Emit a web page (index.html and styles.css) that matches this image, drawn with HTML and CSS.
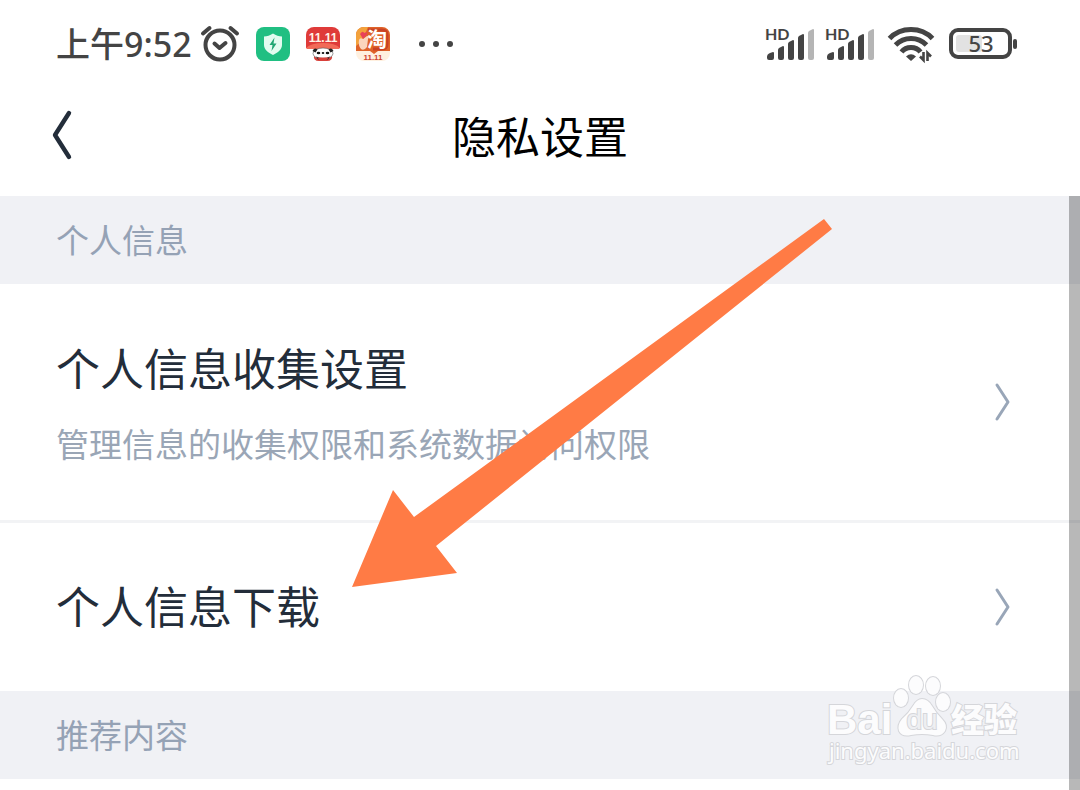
FILE: index.html
```html
<!DOCTYPE html>
<html lang="zh-CN">
<head>
<meta charset="utf-8">
<meta name="viewport" content="width=device-width, initial-scale=1">
<title>隐私设置</title>
<link rel="stylesheet" href="styles.css">
</head>
<body>
<div class="status">
  <div class="status-left">
    <span class="clock">上午9:52</span>
    <svg class="alarm" width="40" height="38" viewBox="0 0 40 38" fill="none" stroke="#444" stroke-width="4" stroke-linecap="round" stroke-linejoin="round">
      <circle cx="20" cy="20" r="14.500"/>
      <path d="M14.500 18.500L19.500 23l6-5"/>
      <path d="M3 8.500L9.500 3M37 8.500L30.500 3" stroke-width="4"/>
    </svg>
    <svg class="app" width="34" height="34" viewBox="0 0 34 34">
      <rect width="34" height="34" rx="8" fill="#20bf82"/>
      <path d="M17 6.500c3 2 6 2.800 9 3v8.500c0 4.500-4 7.500-9 10-5-2.500-9-5.500-9-10V9.500c3-.2 6-1 9-3z" fill="#e2fbf0"/>
      <path d="M18.500 10.500l-5 7.500h3l-1 6 5-7.500h-3z" fill="#20a673"/>
    </svg>
    <svg class="app" width="34" height="34" viewBox="0 0 34 34">
      <path d="M0 21V8a8 8 0 0 1 8-8h18a8 8 0 0 1 8 8v13z" fill="#df3b39"/>
      <path d="M0 21q5-5 17-5t17 5l-1 1H1z" fill="#f26a57"/>
      <text class="mini" x="17" y="15" font-size="12" fill="#fff3e6" text-anchor="middle">11.11</text>
      <path d="M8 28h18q1 6-5 6h-8q-6 0-5-6z" fill="#d8403a"/>
      <ellipse cx="17" cy="26.500" rx="10" ry="5.500" fill="#fff" stroke="#555" stroke-width=".6"/>
      <path d="M6.500 24q2-4 5-1.500l-2 3zM27.500 24q-2-4-5-1.500l2 3zM10 29.500q7 3 14 0l-2 3H12z" fill="#222"/>
      <ellipse cx="12.500" cy="26" rx="1.800" ry="1.300" fill="#111"/><ellipse cx="21.500" cy="26" rx="1.800" ry="1.300" fill="#111"/>
      <ellipse cx="17" cy="26" rx="1.300" ry="1" fill="#111"/>
      <path d="M11 30.500h12l-3 3h-6z" fill="#d8403a"/>
    </svg>
    <svg class="app" width="34" height="34" viewBox="0 0 34 34">
      <rect width="34" height="34" rx="8" fill="#fff0df"/>
      <path d="M0 24V8a8 8 0 0 1 8-8h18a8 8 0 0 1 8 8v16H22l-4 3-4-3z" fill="#df6329"/>
      <path d="M0 8a8 8 0 0 1 8-8h4L6 14l-6 5z" fill="#f3a23c"/>
      <path d="M12 3h14q5 0 5 5v9q0 5-5 5h-9" fill="none" stroke="#c94224" stroke-width="3"/>
      <text class="mini" x="21" y="20" font-size="20" fill="#fff" text-anchor="middle">淘</text>
      <path d="M3 13q1-3 4-1l4-3q3 0 1 3l-1 8q-3 4-6 2-3-3-2-9z" fill="#fbd5bd"/>
      <path d="M4 7q3-4 4-1 4-2 3 1l-4 5z" fill="#e9415a"/>
      <text class="mini" x="17" y="33" font-size="8" fill="#cf4530" text-anchor="middle">11.11</text>
    </svg>
    <svg class="more" width="36" height="8" viewBox="0 0 36 8" fill="#444"><circle cx="4" cy="4" r="3"/><circle cx="18" cy="4" r="3"/><circle cx="32" cy="4" r="3"/></svg>
  </div>
  <div class="status-right">
    <svg class="signal" width="50" height="34" viewBox="0 0 50 34" fill="#444">
      <text class="hd" x="0" y="13" font-size="16">HD</text>
      <path d="M2 30q0-3 3-4l3-1q1 0 1 1v5q0 2-2 2H4q-2 0-2-2zM13 23q0-1 1-2l4-2q1 0 1 1v11q0 2-2 2h-2q-2 0-2-2zM23 17q0-1 1-2l4-2q1 0 1 1v17q0 2-2 2h-2q-2 0-2-2zM33 11q0-1 1-2l4-2q1 0 1 1v23q0 2-2 2h-2q-2 0-2-2z"/>
      <path d="M43 6q0-1 1-2l4-2q1 0 1 1v28q0 2-2 2h-2q-2 0-2-2z" fill="#b5b5b5"/>
    </svg>
    <svg class="signal" width="50" height="34" viewBox="0 0 50 34" fill="#444">
      <text class="hd" x="0" y="13" font-size="16">HD</text>
      <path d="M2 30q0-3 3-4l3-1q1 0 1 1v5q0 2-2 2H4q-2 0-2-2zM13 23q0-1 1-2l4-2q1 0 1 1v11q0 2-2 2h-2q-2 0-2-2zM23 17q0-1 1-2l4-2q1 0 1 1v17q0 2-2 2h-2q-2 0-2-2zM33 11q0-1 1-2l4-2q1 0 1 1v23q0 2-2 2h-2q-2 0-2-2z"/>
      <path d="M43 6q0-1 1-2l4-2q1 0 1 1v28q0 2-2 2h-2q-2 0-2-2z" fill="#b5b5b5"/>
    </svg>
    <svg class="wifi" width="46" height="36" viewBox="0 0 46 36" fill="none" stroke="#444" stroke-width="5">
      <path d="M1.500 12.500Q10 3.500 23 3.500T44.500 12.500"/>
      <path d="M7.500 19Q14 12.500 23 12.500T38.500 19"/>
      <path d="M13.500 26Q17 21.500 23 21.500T32.500 26"/>
      <path d="M18 30.500q5-4.500 10 0L23 35z" fill="#444" stroke="none"/>
      <path d="M35.500 26v8L32 30.500M39.500 35v-8l3.500 3.500" stroke-width="2.600"/>
    </svg>
    <svg class="battery" width="69" height="32" viewBox="0 0 69 32">
      <rect x="2" y="2" width="59" height="27" rx="7" fill="#fff" stroke="#444" stroke-width="4"/>
      <rect x="7" y="7" width="26" height="17" rx="3" fill="#e2e2e2"/>
      <rect x="64" y="11" width="4" height="10" rx="2" fill="#444"/>
      <text class="percent" x="32" y="24" font-size="22" fill="#444" text-anchor="middle">53</text>
    </svg>
  </div>
</div>

<header class="topbar">
  <button class="back" type="button" aria-label="返回">
    <svg width="22" height="50" viewBox="0 0 22 50" fill="none" stroke="#232d3a" stroke-width="4.400" stroke-linecap="round" stroke-linejoin="round"><path d="M19 3L5 25l14 22"/></svg>
  </button>
  <h1 class="title">隐私设置</h1>
</header>

<main class="content">
  <h2 class="section">个人信息</h2>
  <button class="row row-tall" type="button">
    <span class="row-text">
      <span class="row-title">个人信息收集设置</span>
      <span class="row-desc">管理信息的收集权限和系统数据访问权限</span>
    </span>
    <svg class="chevron" width="18" height="38" viewBox="0 0 18 38"><path d="M3 2l11 17L3 36"/></svg>
  </button>
  <button class="row" type="button">
    <span class="row-text"><span class="row-title">个人信息下载</span></span>
    <svg class="chevron" width="18" height="38" viewBox="0 0 18 38"><path d="M3 2l11 17L3 36"/></svg>
  </button>
  <div class="section-wrap">
    <h2 class="section">推荐内容</h2>
    <svg class="watermark" width="200" height="100" viewBox="0 0 200 100">
      <g class="mark">
        <text class="brand" x="1" y="63" font-size="42">Bai</text>
        <ellipse cx="75" cy="27" rx="7" ry="9"/>
        <ellipse cx="90" cy="14" rx="7" ry="9"/>
        <ellipse cx="107" cy="15" rx="7" ry="9"/>
        <ellipse cx="117" cy="31" rx="7" ry="9"/>
        <path d="M96 28q6 0 10 7t10 13q6 6 3 12-4 6-12 4-11-2-22 0-9 2-12-4-2-6 3-12 7-6 11-13t9-7z"/>
        <text class="brand du" x="96" y="58" font-size="28" text-anchor="middle">du</text>
        <text class="brand cjk" x="125" y="61" font-size="33">经验</text>
        <text class="site" x="3" y="88" font-size="22">jingyan.baidu.com</text>
      </g>
    </svg>
  </div>
  <svg class="arrow" width="480" height="368" viewBox="0 0 480 368" aria-hidden="true"><path d="M0 368L41 271l21 27L472 0l8 10L84 327l21 27z"/></svg>
  <div class="scroll-thumb"></div>
</main>
</body>
</html>
```
FILE: styles.css
```css
* { box-sizing: border-box; }

body {
  margin: 0;
  min-height: 100vh;
  display: flex;
  flex-direction: column;
  background: #fff;
  color: #232d3a;
  font-family: "Noto Sans CJK SC", sans-serif;
}

svg { display: block; flex: none; overflow: visible; }

button {
  border: 0;
  background: none;
  color: inherit;
  font: inherit;
  text-align: left;
  cursor: pointer;
}

.status {
  display: flex;
  justify-content: space-between;
  align-items: center;
  height: 88px;
  padding: 0 62px 0 56px;
}

.status-left, .status-right { display: flex; align-items: center; }
.status-left { gap: 16px; }
.status-right { gap: 10px; }

.clock {
  font: 500 34px/48px "Noto Sans", "Noto Sans CJK SC", sans-serif;
  color: #444;
}
.alarm { margin-left: -8px; }
.more { margin-left: 12px; }
.mini { font-family: "Liberation Sans", "Noto Sans CJK SC", sans-serif; font-weight: 700; }
.hd { font-family: Lato, sans-serif; font-weight: 700; }
.percent { font-family: "Noto Sans", sans-serif; font-weight: 500; }
.wifi { margin-left: 3px; }
.battery { margin-left: 5px; }

.topbar {
  display: grid;
  grid-template-columns: 1fr auto 1fr;
  align-items: center;
  height: 108px;
  padding: 0 50px 14px;
}
.back { justify-self: start; padding: 0; }
.title {
  margin: 0;
  color: #000;
  font-size: 44px;
  font-weight: 400;
  line-height: 64px;
}

.content {
  position: relative;
  flex: 1;
}

.section {
  margin: 0;
  padding: 19px 56px 21px;
  background: #f0f1f5;
  color: #95a2b5;
  font-size: 33px;
  font-weight: 400;
  line-height: 48px;
}

.row {
  display: flex;
  align-items: center;
  justify-content: space-between;
  width: 100%;
  padding: 48px 68px 48px 56px;
}
.row-tall {
  padding-top: 49px;
  padding-bottom: 49px;
  border-bottom: 3px solid #f2f3f5;
}
.row-text {
  display: flex;
  flex-direction: column;
  gap: 18px;
  padding-bottom: 4px;
}
.row-title { font-size: 44px; line-height: 68px; }
.row-desc { color: #9aa6b6; font-size: 33px; line-height: 48px; }

.chevron {
  fill: none;
  stroke: #99a6b8;
  stroke-width: 3px;
  stroke-linecap: round;
  stroke-linejoin: round;
}

.section-wrap { position: relative; }

.watermark {
  position: absolute;
  right: 54px;
  bottom: 8px;
  pointer-events: none;
}
.mark { fill: #fcfcfd; stroke: #d5d6da; stroke-width: 2px; paint-order: stroke; }
.brand { font-family: "Liberation Sans", sans-serif; font-weight: 700; }
.cjk { font-family: "Noto Sans CJK SC", sans-serif; font-weight: 900; }
.du { font-weight: 400; fill: #eeeff2; }
.site { font-family: "Noto Sans", sans-serif; }

.arrow {
  position: absolute;
  top: 23px;
  left: 352px;
  fill: #ff7b45;
  pointer-events: none;
}

.scroll-thumb {
  position: absolute;
  top: 0;
  right: 0;
  bottom: 0;
  width: 11px;
  background: rgba(0, 0, 0, 0.28);
}
```
